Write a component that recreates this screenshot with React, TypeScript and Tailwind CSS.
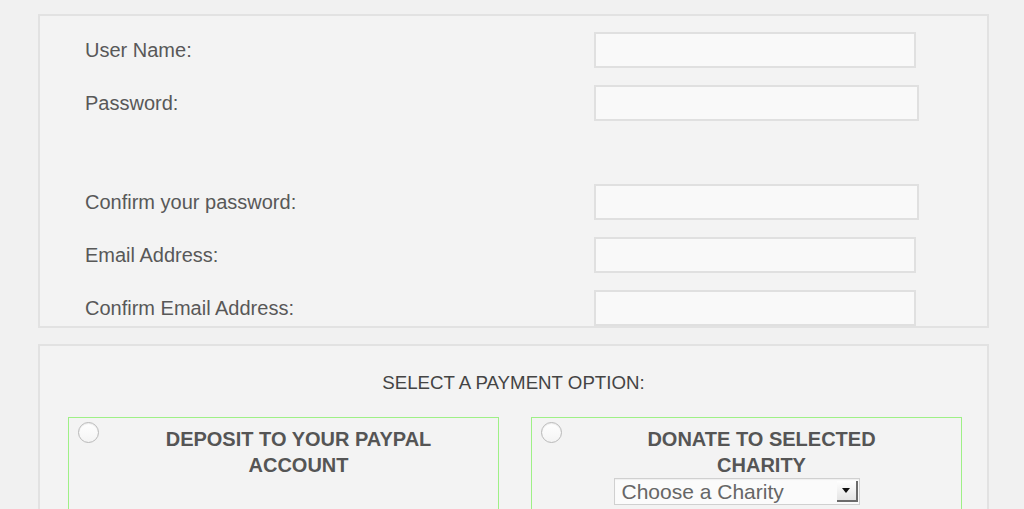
import React from 'react';

type Field = { label: string; width: string; gap?: string };

const fields: Field[] = [
  { label: 'User Name:', width: 'w-[322px]' },
  { label: 'Password:', width: 'w-[325px]', gap: 'mt-[17px]' },
  { label: 'Confirm your password:', width: 'w-[325px]', gap: 'mt-[63px]' },
  { label: 'Email Address:', width: 'w-[322px]', gap: 'mt-[17px]' },
  { label: 'Confirm Email Address:', width: 'w-[322px]', gap: 'mt-[17px]' },
];

const Radio = () => (
  <div className="mt-[4px] ml-[9px] h-[21px] w-[21px] shrink-0 rounded-full border border-[#b9b9b9] bg-gradient-to-b from-white to-[#f4f4f4] shadow-[inset_0_1px_1px_rgba(0,0,0,0.08)]" />
);

const CharitySelect = () => (
  <div className="flex h-[27px] w-[246px] items-stretch border border-[#d0d0d0] bg-[#fbfbfb] shadow-[inset_0_1px_1px_rgba(0,0,0,0.05)]">
    <span className="flex-1 pl-[7px] text-[21px] leading-[25px] text-[#666]">Choose a Charity</span>
    <div className="my-[2px] mr-[1px] flex w-[21px] items-center justify-center border-r-2 border-b-2 border-[#6b6b6b] bg-gradient-to-b from-white to-[#e4e4e4]">
      <svg width="8" height="5" viewBox="0 0 8 5">
        <path d="M0 0h8L4 5z" fill="#111" />
      </svg>
    </div>
  </div>
);

const OptionBox = ({ children }: { children: React.ReactNode }) => (
  <div className="flex h-[130px] w-[431px] border border-[#9ef086]">
    <Radio />
    {children}
  </div>
);

export default function App() {
  return (
    <div className="h-[509px] overflow-hidden bg-[#f1f1f1] pt-[14px] font-['Liberation_Sans',Arial,sans-serif] text-[#555]">
      {/* account details */}
      <div className="ml-[38px] w-[951px] border-2 border-[#e2e2e2] bg-[#f3f3f3] pt-[16px]">
        {fields.map((f) => (
          <div key={f.label} className={`flex items-center ${f.gap ?? ''}`}>
            <label className="w-[554px] pl-[45px] text-[20px] leading-[24px] text-[#585858]">{f.label}</label>
            <div className={`h-[36px] ${f.width} border-2 border-[#e0e0e0] bg-[#f9f9f9]`} />
          </div>
        ))}
      </div>

      {/* payment options */}
      <div className="mt-[16px] ml-[38px] w-[951px] border-2 border-[#e2e2e2] bg-[#f3f3f3] pt-[26px] pb-[40px]">
        <h2 className="text-center text-[18.7px] leading-[22px] text-[#444]">SELECT A PAYMENT OPTION:</h2>
        <div className="mt-[23px] flex gap-[32px] pl-[28px]">
          <OptionBox>
            <div className="flex-1 pt-[8px] text-center text-[20px] leading-[26px] font-bold text-[#555]">
              DEPOSIT TO YOUR PAYPAL
              <br />
              ACCOUNT
            </div>
          </OptionBox>
          <OptionBox>
            <div className="flex flex-1 flex-col items-center pt-[8px]">
              <div className="text-center text-[20px] leading-[26px] font-bold text-[#555]">
                DONATE TO SELECTED
                <br />
                CHARITY
              </div>
              <div className="mr-[50px]">
                <CharitySelect />
              </div>
            </div>
          </OptionBox>
        </div>
      </div>
    </div>
  );
}
